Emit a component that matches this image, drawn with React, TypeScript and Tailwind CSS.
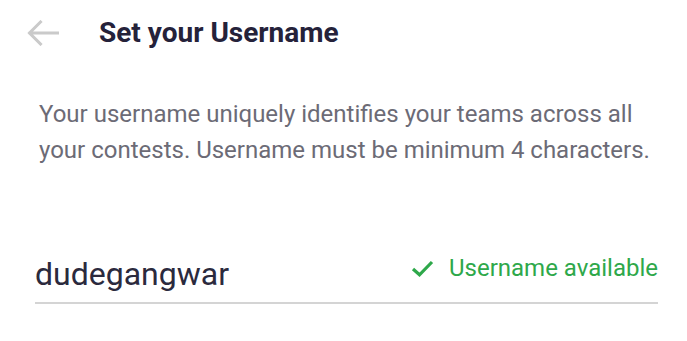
import React from 'react';

export default function App() {
  return (
    <div className="w-[687px] h-[341px] bg-white font-['Roboto',sans-serif] overflow-hidden">
      {/* header */}
      <div className="flex items-center h-[66px] pl-[27px]">
        <svg width="32" height="26" viewBox="0 0 32 26" fill="none" className="shrink-0">
          <path d="M31 13H3M13.5 2L2.5 13l11 11" stroke="#cacaca" strokeWidth="3" strokeLinecap="square" />
        </svg>
        <h1 className="ml-[40px] text-[28px] font-bold text-[#25223a] leading-none">Set your Username</h1>
      </div>

      <p className="mt-[30px] pl-[39px] pr-[24px] text-[24px] leading-[36px] text-[#6c6b76]">
        Your username uniquely identifies your teams across all your contests. Username must be minimum 4 characters.
      </p>

      {/* input */}
      <div className="mt-[80px] mx-[35px] w-[623px] flex items-end justify-between border-b-2 border-[#d4d4d4] pb-[8px]">
        <span className="text-[32px] leading-[40px] text-[#2b2a3d]">dudegangwar</span>
        <span className="flex items-center gap-[15px] text-[24px] leading-[40px] text-[#2ea84a] mb-[6px]">
          <svg width="23" height="17" viewBox="0 0 23 17" fill="none">
            <path d="M2 9l6.5 5.8L21 2" stroke="#2ea84a" strokeWidth="3.2" />
          </svg>
          Username available
        </span>
      </div>
    </div>
  );
}
